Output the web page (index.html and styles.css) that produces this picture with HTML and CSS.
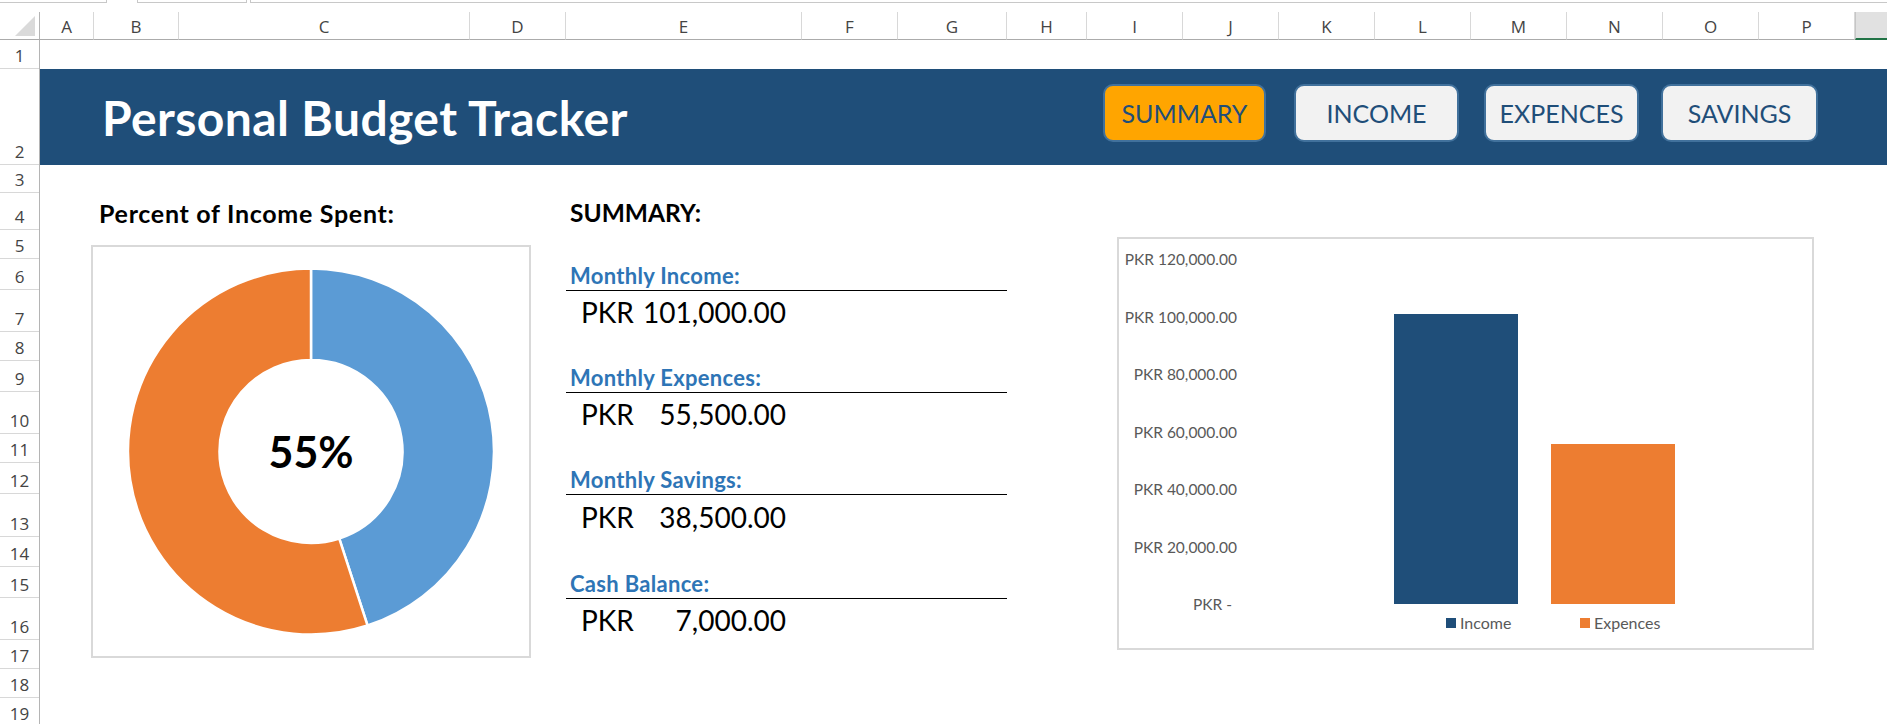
FILE: index.html
```html
<!DOCTYPE html>
<html lang="en">
<head>
<meta charset="utf-8">
<title>Personal Budget Tracker</title>
<link rel="stylesheet" href="styles.css">
</head>
<body>
<div class="formula-strip">
  <div class="fx-box fx-name"></div>
  <div class="fx-box fx-tools"></div>
  <div class="fx-box fx-input"></div>
</div>
<div class="col-heads">
  <div class="corner"><svg class="corner-tri" width="39" height="27" viewBox="0 0 39 27"><polygon points="35,4 35,24 15,24" fill="#dadada"/></svg></div>
  <div class="ch">A</div>
  <div class="ch">B</div>
  <div class="ch">C</div>
  <div class="ch">D</div>
  <div class="ch">E</div>
  <div class="ch">F</div>
  <div class="ch">G</div>
  <div class="ch">H</div>
  <div class="ch">I</div>
  <div class="ch">J</div>
  <div class="ch">K</div>
  <div class="ch">L</div>
  <div class="ch">M</div>
  <div class="ch">N</div>
  <div class="ch">O</div>
  <div class="ch">P</div>
  <div class="ch ch-selected"></div>
</div>
<div class="sheet">
  <div class="row-heads">
    <div class="rh">1</div>
    <div class="rh">2</div>
    <div class="rh">3</div>
    <div class="rh">4</div>
    <div class="rh">5</div>
    <div class="rh">6</div>
    <div class="rh">7</div>
    <div class="rh">8</div>
    <div class="rh">9</div>
    <div class="rh">10</div>
    <div class="rh">11</div>
    <div class="rh">12</div>
    <div class="rh">13</div>
    <div class="rh">14</div>
    <div class="rh">15</div>
    <div class="rh">16</div>
    <div class="rh">17</div>
    <div class="rh">18</div>
    <div class="rh">19</div>
  </div>
  <div class="cells">
    <header class="banner">
      <h1 class="banner-title">Personal Budget Tracker</h1>
      <nav class="tabs">
        <div class="tab tab-summary is-active">SUMMARY</div>
        <div class="tab tab-income">INCOME</div>
        <div class="tab tab-expences">EXPENCES</div>
        <div class="tab tab-savings">SAVINGS</div>
      </nav>
    </header>

    <div class="cell-title donut-title">Percent of Income Spent:</div>
    <div class="chart-card donut-card">
      <svg class="donut" width="436" height="409" viewBox="0 0 436 409">
        <path d="M218 21.5 A183 183 0 0 1 274.55 378.54 L246.28 291.52 A91.5 91.5 0 0 0 218 113 Z" fill="#5b9bd5" stroke="#fff" stroke-width="2.5" stroke-linejoin="miter"/>
        <path d="M274.55 378.54 A183 183 0 1 1 218 21.5 L218 113 A91.5 91.5 0 1 0 246.28 291.52 Z" fill="#ed7d31" stroke="#fff" stroke-width="2.5" stroke-linejoin="miter"/>
      </svg>
      <div class="donut-value">55%</div>
    </div>

    <div class="cell-title summary-title">SUMMARY:</div>
    <div class="metric metric-income">
      <div class="metric-label">Monthly Income:</div>
      <div class="metric-amount"><span>PKR</span><span>101,000.00</span></div>
    </div>
    <div class="metric metric-expences">
      <div class="metric-label">Monthly Expences:</div>
      <div class="metric-amount"><span>PKR</span><span>55,500.00</span></div>
    </div>
    <div class="metric metric-savings">
      <div class="metric-label">Monthly Savings:</div>
      <div class="metric-amount"><span>PKR</span><span>38,500.00</span></div>
    </div>
    <div class="metric metric-cash">
      <div class="metric-label">Cash Balance:</div>
      <div class="metric-amount"><span>PKR</span><span>7,000.00</span></div>
    </div>

    <div class="chart-card bar-card">
      <div class="y-axis">
        <div>PKR 120,000.00</div>
        <div>PKR 100,000.00</div>
        <div>PKR 80,000.00</div>
        <div>PKR 60,000.00</div>
        <div>PKR 40,000.00</div>
        <div>PKR 20,000.00</div>
        <div class="y-zero">PKR -</div>
      </div>
      <div class="plot">
        <div class="bar bar-income" style="height:84.17%"></div>
        <div class="bar bar-expences" style="height:46.25%"></div>
      </div>
      <div class="legend">
        <div class="legend-item legend-item-income"><span class="swatch swatch-income"></span><span>Income</span></div>
        <div class="legend-item"><span class="swatch swatch-expences"></span><span>Expences</span></div>
      </div>
    </div>
  </div>
</div>
</body>
</html>
```
FILE: styles.css
```css
:root {
  --rows: 29px 96px 28px 37px 29px 31px 42px 29px 31px 42px 29px 31px 43px 30px 31px 42px 29px 29px 29px;
  --cols: 54px 85px 291px 96px 236px 96px 109px 80px repeat(8, 96px) 1fr;
}

* { box-sizing: border-box; }

html, body { margin: 0; padding: 0; }

body {
  width: 1887px;
  height: 724px;
  overflow: hidden;
  background: #fff;
  font-family: Lato, "Liberation Sans", sans-serif;
  color: #000;
}

/* formula bar remnants at the very top */
.formula-strip {
  display: flex;
  height: 12px;
}
.fx-box {
  height: 3px;
  border: 1px solid #c8c8c8;
  border-top: 0;
}
.fx-name { width: 107px; border-left: 0; }
.fx-tools { width: 110px; margin-left: 30px; }
.fx-input { flex: 1; margin-left: 3px; border-right: 0; }

/* column headers */
.col-heads {
  display: grid;
  grid-template-columns: 40px var(--cols);
  height: 28px;
  font-family: "Open Sans", "Liberation Sans", sans-serif;
  font-size: 17px;
  color: #444;
}
.corner {
  border-right: 1px solid #b4b4b4;
  border-bottom: 1px solid #ababab;
}
.corner-tri { display: block; }
.ch {
  display: flex;
  align-items: flex-end;
  justify-content: center;
  line-height: 20px;
  padding-bottom: 2px;
  border-right: 1px solid #d8d8d8;
  border-bottom: 1px solid #ababab;
}
.ch-selected {
  background: #e1e1e1;
  border-right: 0;
  border-left: 1px solid #c6c6c6;
  border-bottom: 2px solid #217346;
}

/* sheet body */
.sheet {
  display: flex;
}
.row-heads {
  width: 40px;
  flex: none;
  display: grid;
  grid-template-rows: var(--rows);
  border-right: 1px solid #b4b4b4;
  font-family: "Open Sans", "Liberation Sans", sans-serif;
  font-size: 17px;
  color: #444;
}
.rh {
  display: flex;
  align-items: flex-end;
  justify-content: center;
  line-height: 20px;
  padding-bottom: 2px;
  border-bottom: 1px solid #d8d8d8;
}

.cells {
  flex: 1;
  display: grid;
  grid-template-columns: var(--cols);
  grid-template-rows: var(--rows);
}

/* banner */
.banner {
  grid-row: 2;
  grid-column: 1 / -1;
  background: #1f4e79;
  display: flex;
  align-items: flex-start;
}
.banner-title {
  margin: 0;
  padding: 20px 0 0 62px;
  font-size: 48px;
  line-height: 57px;
  letter-spacing: 0.4px;
  font-weight: 700;
  color: #fff;
}
.tabs {
  margin: 15px 69px 0 auto;
  display: flex;
  gap: 22px;
}
.tab {
  height: 58px;
  border: 2px solid #41719c;
  border-radius: 10px;
  background: #f2f2f2;
  color: #1f4e79;
  font-size: 25px;
  display: flex;
  align-items: center;
  justify-content: center;
}
.tab.is-active { background: #ffa500; }
.tab-summary { width: 163px; }
.tab-income { width: 165px; margin-left: 6px; }
.tab-expences { width: 155px; margin-left: 3px; }
.tab-savings { width: 157px; }

/* cell titles */
.cell-title {
  grid-row: 4;
  align-self: end;
  font-weight: 700;
  line-height: 28px;
  padding: 0 0 3px 5px;
}
.donut-title {
  grid-column: 2 / 5;
  font-size: 25px;
  letter-spacing: 0.7px;
}
.summary-title {
  grid-column: 5 / 8;
  padding-left: 4px;
  font-size: 24.5px;
}

/* chart cards */
.chart-card {
  grid-row: 5 / 18;
  align-self: start;
  justify-self: start;
  height: 413px;
  border: 2px solid #d9d9d9;
  background: #fff;
}
.donut-card {
  grid-column: 1 / 5;
  width: 440px;
  margin: 15px 0 0 51px;
  display: grid;
}
.donut,
.donut-value { grid-area: 1 / 1; }
.donut { display: block; }
.donut-value {
  align-self: center;
  justify-self: center;
  font-size: 43px;
  line-height: 52px;
  font-weight: 700;
}

/* summary metrics */
.metric {
  grid-column: 5 / 8;
  display: grid;
  grid-template-rows: 32px 1fr;
}
.metric-income { grid-row: 6 / 8; }
.metric-expences { grid-row: 9 / 11; }
.metric-savings { grid-row: 12 / 14; }
.metric-cash { grid-row: 15 / 17; }
.metric-label {
  display: flex;
  align-items: flex-end;
  border-bottom: 1px solid #000;
  padding: 0 0 2px 4px;
  color: #2e75b6;
  font-size: 22px;
  line-height: 24px;
  letter-spacing: 0.3px;
  font-weight: 700;
}
.metric-amount {
  width: 236px;
  display: flex;
  justify-content: space-between;
  align-items: flex-end;
  padding: 0 16px 4px 15px;
  font-size: 28px;
  line-height: 32px;
}

/* bar chart */
.bar-card {
  grid-column: 8 / 17;
  width: 697px;
  margin: 7px 0 0 110px;
  padding-top: 10px;
  display: grid;
  grid-template-columns: 118px 1fr;
  grid-template-rows: 365px 18px;
  font-size: 15.5px;
  color: #595959;
}
.y-axis {
  display: flex;
  flex-direction: column;
  justify-content: space-between;
  text-align: right;
  line-height: 20px;
  white-space: nowrap;
}
.y-zero { padding-right: 5px; }
.plot {
  height: 365px;
  display: flex;
  align-items: flex-end;
  gap: 33px;
  padding: 10px 0 10px 157px;
}
.bar { width: 124px; }
.bar-income { background: #1f4e79; }
.bar-expences { background: #ed7d31; }
.legend {
  grid-column: 2;
  display: flex;
  align-items: center;
  padding-left: 209px;
  line-height: 18px;
  font-size: 16px;
}
.legend-item {
  display: flex;
  align-items: center;
  gap: 4px;
}
.legend-item-income { width: 134px; }
.swatch { width: 10px; height: 10px; }
.swatch-income { background: #1f4e79; }
.swatch-expences { background: #ed7d31; }
```
